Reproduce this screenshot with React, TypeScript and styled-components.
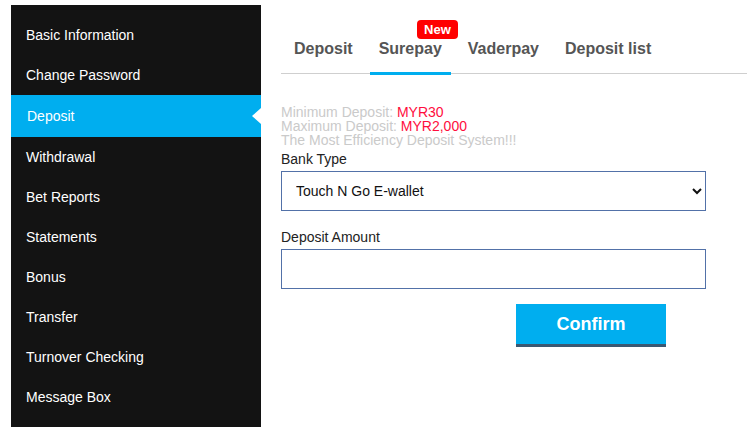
import React from 'react';
import styled, { createGlobalStyle } from 'styled-components';

const fontFamily = `"Liberation Sans", Arial, sans-serif`;
const blue = '#00aeef';

const GlobalStyle = createGlobalStyle`
  html, body {
    margin: 0;
    padding: 0;
    background: #fff;
    font-family: ${fontFamily};
  }
`;

const menuItems = [
  'Basic Information',
  'Change Password',
  'Deposit',
  'Withdrawal',
  'Bet Reports',
  'Statements',
  'Bonus',
  'Transfer',
  'Turnover Checking',
  'Message Box',
];

const tabs = [
  { label: 'Deposit' },
  { label: 'Surepay', active: true, isNew: true },
  { label: 'Vaderpay' },
  { label: 'Deposit list' },
];

const Page = styled.div`
  display: flex;
  align-items: flex-start;
  padding: 5px 0 0 11px;
  gap: 20px;
  width: 747px;
  box-sizing: border-box;
  overflow: hidden;
`;

const Sidebar = styled.nav`
  width: 250px;
  flex-shrink: 0;
  background: #131313;
  padding: 10px 0;
`;

const MenuItem = styled.div<{ active?: boolean }>`
  position: relative;
  display: flex;
  align-items: center;
  height: ${({ active }) => (active ? '42px' : '40px')};
  padding-left: ${({ active }) => (active ? '16px' : '15px')};
  background: ${({ active }) => (active ? blue : 'transparent')};
  color: #fff;
  font-size: 14px;
`;

const Arrow = styled.span`
  position: absolute;
  right: 0;
  top: 50%;
  margin-top: -8px;
  width: 0;
  height: 0;
  border-top: 8px solid transparent;
  border-bottom: 8px solid transparent;
  border-right: 9px solid #fff;
`;

const Main = styled.main`
  flex: 1;
  min-width: 0;
`;

const TabBar = styled.div`
  display: flex;
  gap: 8px;
  padding: 0 0 0 4px;
  margin-top: 5px;
  border-bottom: 1px solid #cfcfcf;
  margin-right: -40px;
`;

const Tab = styled.div<{ active?: boolean }>`
  position: relative;
  padding: 15px 9px 0;
  height: 65px;
  display: flex;
  align-items: center;
  box-sizing: border-box;
  font-size: 16px;
  font-weight: bold;
  color: #555;
  margin-bottom: -2px;
  border-bottom: 3px solid ${({ active }) => (active ? blue : 'transparent')};
`;

const NewBadge = styled.span`
  position: absolute;
  top: 10px;
  right: -7px;
  background: #f00;
  color: #fff;
  font-size: 13px;
  font-weight: bold;
  line-height: 19px;
  padding: 0 7px;
  border-radius: 4px;
`;

const Form = styled.div`
  width: 425px;
  padding-top: 31px;
`;

const Info = styled.div`
  color: #cacaca;
  font-size: 14px;
  line-height: 14px;
`;

const Amount = styled.span`
  color: #ff0d3d;
`;

const Label = styled.div`
  color: #222;
  font-size: 14px;
  line-height: 16px;
  margin-top: 4px;
  margin-bottom: 4px;
`;

const Select = styled.select`
  display: block;
  width: 100%;
  height: 40px;
  border: 1px solid #5271a8;
  border-radius: 0;
  background: #fff;
  padding: 0 6px 0 10px;
  font-family: ${fontFamily};
  font-size: 14px;
  color: #111;
  outline: none;
`;

const Input = styled.input`
  display: block;
  width: 100%;
  height: 40px;
  box-sizing: border-box;
  border: 1px solid #5271a8;
  border-radius: 0;
  padding: 0 10px;
  font-family: ${fontFamily};
  font-size: 14px;
  outline: none;
`;

const Field = styled.div<{ gap?: number }>`
  margin-top: ${({ gap }) => gap ?? 0}px;
`;

const Actions = styled.div`
  padding: 15px 0 0 235px;
`;

const ConfirmButton = styled.button`
  width: 150px;
  height: 43px;
  border: 0;
  border-bottom: 3px solid #3b5872;
  border-radius: 0;
  background: ${blue};
  color: #fff;
  font-family: ${fontFamily};
  font-size: 18px;
  font-weight: bold;
  padding: 0;
  cursor: pointer;
`;

export default function App() {
  return (
    <>
      <GlobalStyle />
      <Page>
        <Sidebar>
          {menuItems.map((item) => (
            <MenuItem key={item} active={item === 'Deposit'}>
              {item}
              {item === 'Deposit' && <Arrow />}
            </MenuItem>
          ))}
        </Sidebar>
        <Main>
          <TabBar>
            {tabs.map((t) => (
              <Tab key={t.label} active={t.active}>
                {t.label}
                {t.isNew && <NewBadge>New</NewBadge>}
              </Tab>
            ))}
          </TabBar>
          <Form>
            <Info>
              Minimum Deposit: <Amount>MYR30</Amount>
              <br />
              Maximum Deposit: <Amount>MYR2,000</Amount>
              <br />
              The Most Efficiency Deposit System!!!
            </Info>
            <Label>Bank Type</Label>
            <Select defaultValue="tng">
              <option value="tng">Touch N Go E-wallet</option>
            </Select>
            <Field gap={18}>
              <Label>Deposit Amount</Label>
              <Input type="text" />
            </Field>
            <Actions>
              <ConfirmButton>Confirm</ConfirmButton>
            </Actions>
          </Form>
        </Main>
      </Page>
    </>
  );
}
